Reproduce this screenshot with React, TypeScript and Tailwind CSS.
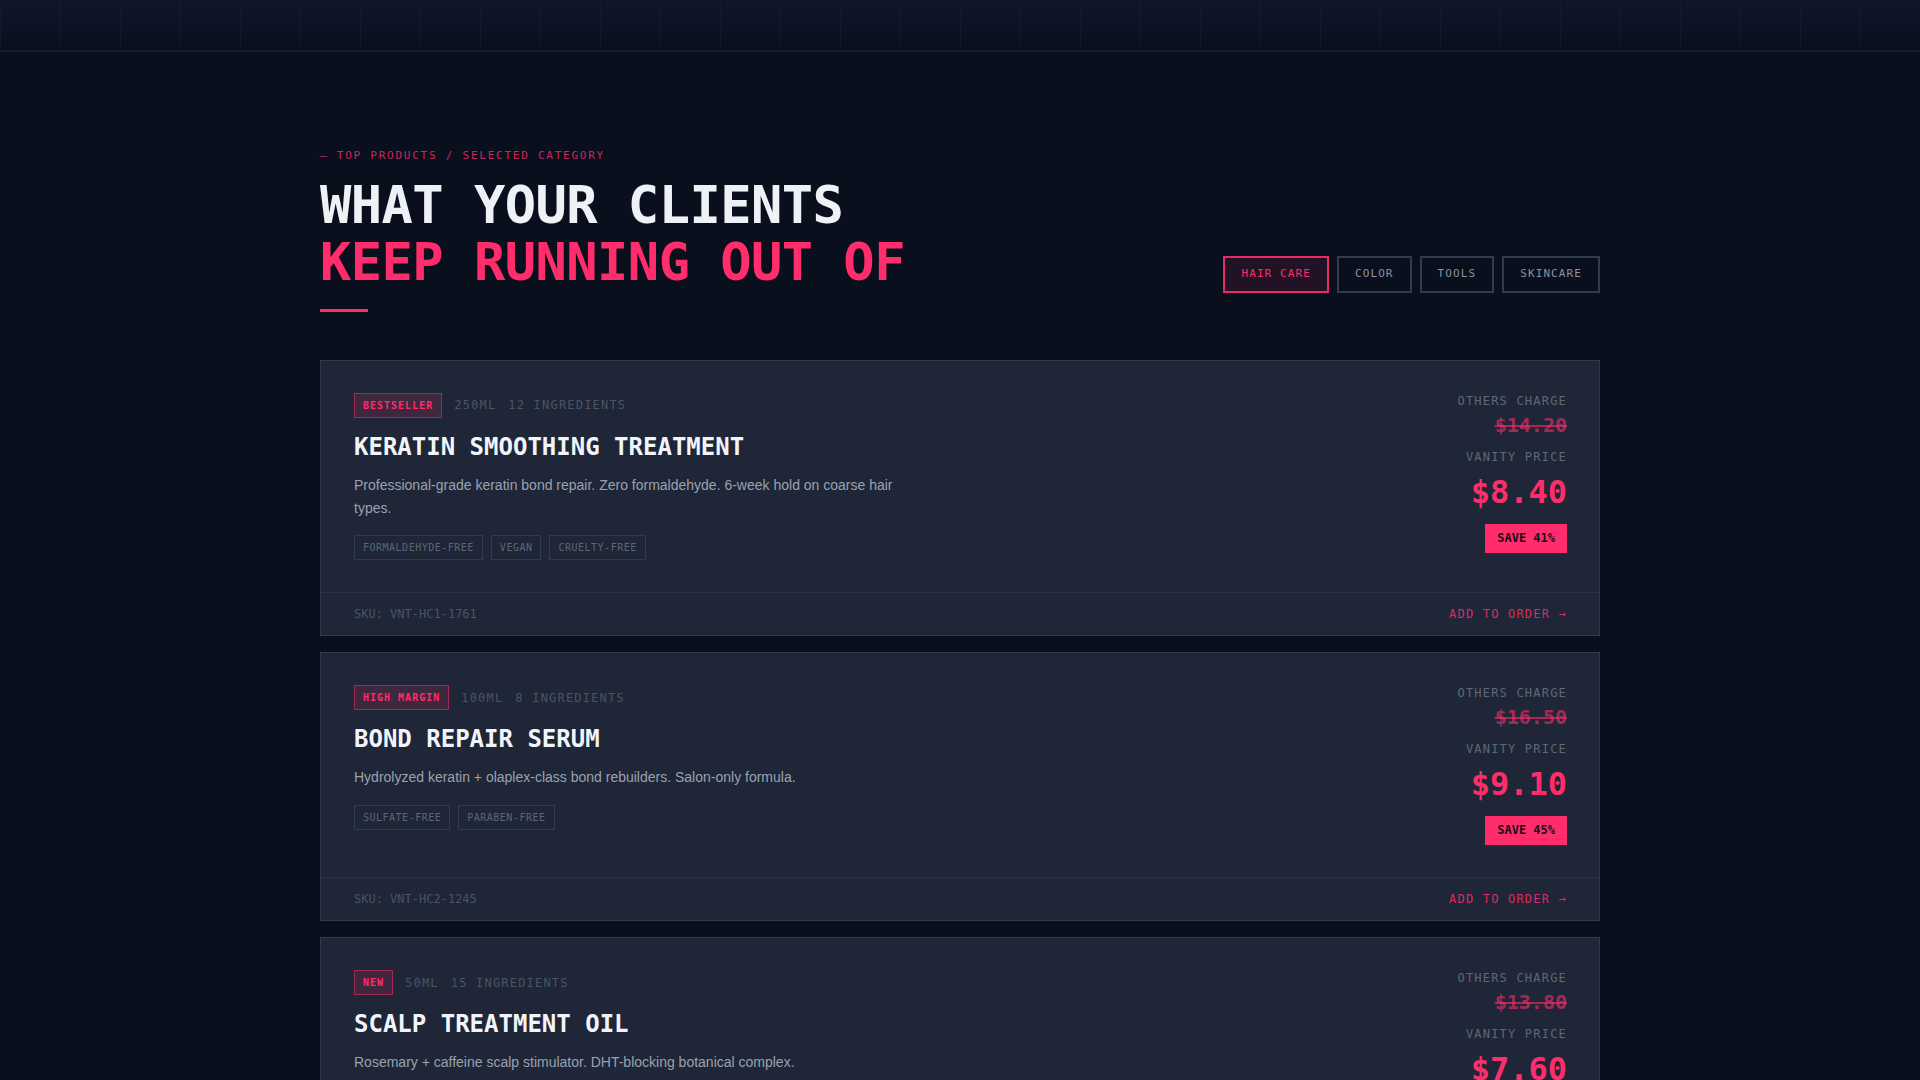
import React from "react";

type Product = {
  badge: string;
  size: string;
  ingredients: string;
  name: string;
  desc: string;
  tags: string[];
  sku: string;
  others: string;
  price: string;
  save: string;
};

const products: Product[] = [
  {
    badge: "BESTSELLER",
    size: "250ML",
    ingredients: "12 INGREDIENTS",
    name: "KERATIN SMOOTHING TREATMENT",
    desc: "Professional-grade keratin bond repair. Zero formaldehyde. 6-week hold on coarse hair types.",
    tags: ["FORMALDEHYDE-FREE", "VEGAN", "CRUELTY-FREE"],
    sku: "SKU: VNT-HC1-1761",
    others: "$14.20",
    price: "$8.40",
    save: "SAVE 41%",
  },
  {
    badge: "HIGH MARGIN",
    size: "100ML",
    ingredients: "8 INGREDIENTS",
    name: "BOND REPAIR SERUM",
    desc: "Hydrolyzed keratin + olaplex-class bond rebuilders. Salon-only formula.",
    tags: ["SULFATE-FREE", "PARABEN-FREE"],
    sku: "SKU: VNT-HC2-1245",
    others: "$16.50",
    price: "$9.10",
    save: "SAVE 45%",
  },
  {
    badge: "NEW",
    size: "50ML",
    ingredients: "15 INGREDIENTS",
    name: "SCALP TREATMENT OIL",
    desc: "Rosemary + caffeine scalp stimulator. DHT-blocking botanical complex.",
    tags: ["SILICONE-FREE", "VEGAN"],
    sku: "SKU: VNT-HC3-0932",
    others: "$13.80",
    price: "$7.60",
    save: "SAVE 45%",
  },
];

const filters = ["HAIR CARE", "COLOR", "TOOLS", "SKINCARE"];

function ProductCard({ p }: { p: Product }) {
  return (
    <div className="border border-[#303a4b] bg-[#1e2637]">
      <div className="flex justify-between gap-8 py-8 pl-[33px] pr-8">
        <div className="flex flex-col">
          <div className="flex items-center gap-3">
            <span className="border border-[#ff2d6b]/50 bg-[#ff2d6b]/15 px-2 py-1 text-[10px] font-bold leading-[15px] tracking-[0.1em] text-[#ff2d6b]">
              {p.badge}
            </span>
            <span className="text-[12px] leading-[18px] tracking-[0.1em] text-[#4b5464]">{p.size}</span>
            <span className="text-[12px] leading-[18px] tracking-[0.1em] text-[#4b5464]">{p.ingredients}</span>
          </div>
          <h2 className="mt-[14px] text-[24px] font-bold leading-[1.25] text-[#f1f5f9]">{p.name}</h2>
          <p className="mt-3 max-w-[560px] font-['Liberation_Sans',Arial,sans-serif] text-[14px] leading-[1.625] text-[#9aa2b0]">
            {p.desc}
          </p>
          <div className="mt-4 flex gap-2">
            {p.tags.map((t) => (
              <span
                key={t}
                className="border border-[#323b4c] px-2 py-1 text-[10px] leading-[15px] tracking-[0.05em] text-[#5d6676]"
              >
                {t}
              </span>
            ))}
          </div>
        </div>
        <div className="-mt-px flex shrink-0 flex-col items-end text-right">
          <div className="text-[12px] leading-[18px] tracking-[0.1em] text-[#5f6878]">OTHERS CHARGE</div>
          <div className="text-[20px] font-bold leading-[30px] text-[#ff2d6b]/60 line-through decoration-[#ff2d6b]/60">
            {p.others}
          </div>
          <div className="mt-2 text-[12px] leading-[18px] tracking-[0.1em] text-[#5f6878]">VANITY PRICE</div>
          <div className="mt-[10px] text-[32px] font-bold leading-none text-[#ff2d6b]">{p.price}</div>
          <div className="mt-4 bg-[#ff2d6b] px-3 py-1.5 text-[12px] font-bold leading-[17px] text-[#1a0b16]">
            {p.save}
          </div>
        </div>
      </div>
      <div className="flex items-center justify-between border-t border-[#2a3343] py-3 pl-[33px] pr-8">
        <span className="text-[12px] leading-[18px] text-[#4b5464]">{p.sku}</span>
        <span className="text-[12px] leading-[18px] tracking-[0.1em] text-[#ff2d6b]/85">ADD TO ORDER →</span>
      </div>
    </div>
  );
}

export default function App() {
  const cells = Array.from({ length: 33 });
  return (
    <div className="min-h-screen bg-[#0a0f1e] font-['DejaVu_Sans_Mono','Liberation_Mono',monospace]">
      <header className="flex h-[52px] overflow-hidden border-b-2 border-[#171e2d] bg-gradient-to-b from-[#10162a] to-[#0a0f1e]">
        {cells.map((_, i) => (
          <div key={i} className="h-[48px] w-[60px] shrink-0 border-l border-[#121a2a]" />
        ))}
      </header>
      <main className="mx-auto max-w-[1280px] pb-24 pt-24">
        <div className="flex items-end justify-between">
          <div>
            <div className="text-[11px] leading-[16.5px] tracking-[0.16em] text-[#ff2d6b]/80">
              — TOP PRODUCTS / SELECTED CATEGORY
            </div>
            <h1 className="mt-3 text-[52px] font-bold leading-[1.1] tracking-[-0.01em]">
              <span className="block text-[#eef2f7]">WHAT YOUR CLIENTS</span>
              <span className="block text-[#ff2d6b]">KEEP RUNNING OUT OF</span>
            </h1>
          </div>
          <div className="-mb-[2px] flex gap-2">
            {filters.map((f, i) =>
              i === 0 ? (
                <button
                  key={f}
                  className="border-2 border-[#ff2d6b]/90 bg-[#ff2d6b]/10 px-4 py-2 text-[11px] leading-[16.5px] tracking-[0.1em] text-[#ff2d6b]"
                >
                  {f}
                </button>
              ) : (
                <button
                  key={f}
                  className="border-2 border-[#343c4b] px-4 py-2 text-[11px] leading-[16.5px] tracking-[0.1em] text-[#8b93a1]"
                >
                  {f}
                </button>
              )
            )}
          </div>
        </div>
        <div className="mt-[18px] h-[3px] w-12 bg-[#ff2d6b]" />
        <div className="mt-12 flex flex-col gap-4">
          {products.map((p) => (
            <ProductCard key={p.sku} p={p} />
          ))}
        </div>
      </main>
    </div>
  );
}
